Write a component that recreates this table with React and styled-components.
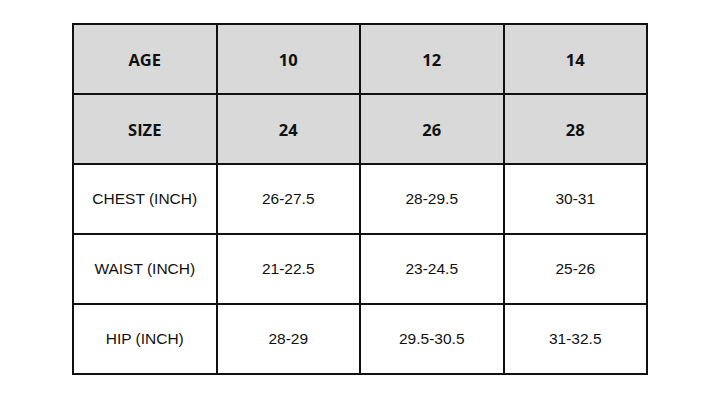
import React from "react";
import styled, { createGlobalStyle } from "styled-components";

const Global = createGlobalStyle`
  html, body { margin: 0; padding: 0; background: #ffffff; }
  body { width: 720px; height: 402px; overflow: hidden; }
`;

const Page = styled.div`
  padding: 23px 0 0 72px;
`;

const Grid = styled.div`
  display: grid;
  grid-template-columns: repeat(4, 1fr);
  grid-template-rows: repeat(5, 68px);
  gap: 2px;
  padding: 2px;
  width: 572px;
  background: #111111;
`;

const Cell = styled.div`
  display: flex;
  align-items: center;
  justify-content: center;
  background: ${(p) => (p.$head ? "#d9d9d9" : "#ffffff")};
  color: #111111;
  font-family: ${(p) => (p.$head ? '"Open Sans", "Noto Sans", sans-serif' : '"Liberation Sans", Arial, sans-serif')};
  font-weight: ${(p) => (p.$head ? 700 : 400)};
  font-size: ${(p) => (p.$head ? "16.5px" : "15.5px")};
`;

const rows = [
  { head: true, cells: ["AGE", "10", "12", "14"] },
  { head: true, cells: ["SIZE", "24", "26", "28"] },
  { head: false, cells: ["CHEST (INCH)", "26-27.5", "28-29.5", "30-31"] },
  { head: false, cells: ["WAIST (INCH)", "21-22.5", "23-24.5", "25-26"] },
  { head: false, cells: ["HIP (INCH)", "28-29", "29.5-30.5", "31-32.5"] },
];

export default function App() {
  return (
    <>
      <Global />
      <Page>
        <Grid>
          {rows.map((r, i) =>
            r.cells.map((c, j) => (
              <Cell key={`${i}-${j}`} $head={r.head}>
                {c}
              </Cell>
            ))
          )}
        </Grid>
      </Page>
    </>
  );
}
